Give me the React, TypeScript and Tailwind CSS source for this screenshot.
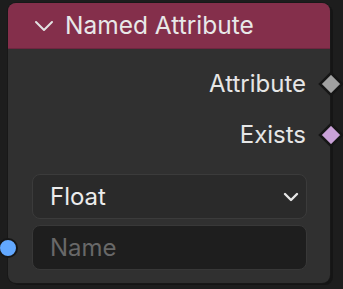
import React from 'react';

const font = { fontFamily: 'Inter, "Noto Sans", sans-serif' };

const Diamond: React.FC<{ color: string; className: string }> = ({ color, className }) => (
  <svg className={className} width="26" height="26" viewBox="0 0 26 26">
    <polygon points="13,2 24,13 13,24 2,13" fill={color} stroke="#161616" strokeWidth="2.5" />
  </svg>
);

export default function App() {
  return (
    <div className="w-[343px] h-[289px] bg-[#1d1d1d] pt-[3px] pl-[8px] overflow-hidden" style={font}>
      <div className="relative w-[322px] h-[280px] rounded-[8px] bg-[#303030] shadow-[0_0_0_1px_#181818,3px_2px_0_#151515]">
        {/* Header */}
        <div className="h-[46px] rounded-t-[8px] bg-[#842f4b] border-b border-[#6e2640] flex items-center pl-[26px] gap-[11px]">
          <svg width="20" height="14" viewBox="0 0 20 14" className="mt-[1px]">
            <polyline points="2,3 10,11 18,3" fill="none" stroke="#e2e2e2" strokeWidth="2" strokeLinecap="round" strokeLinejoin="round" />
          </svg>
          <span className="text-[24.5px] text-[#e8e8e8] leading-none">Named Attribute</span>
        </div>

        {/* Outputs */}
        <div className="flex flex-col pr-[24px] pt-[20px]">
          <div className="h-[30px] flex items-center justify-end text-[24px] text-[#e6e6e6]">Attribute</div>
          <div className="h-[30px] mt-[21px] flex items-center justify-end text-[24px] text-[#e6e6e6]">Exists</div>
        </div>

        {/* Inputs */}
        <div className="flex flex-col gap-[6px] pl-[24px] pr-[23px] mt-[24px]">
          <div className="h-[45px] rounded-[8px] bg-[#2a2a2a] border border-[#3b3b3b] flex items-center justify-between pl-[17px] pr-[7px]">
            <span className="text-[24px] text-[#ececec]">Float</span>
            <svg width="16" height="10" viewBox="0 0 16 10">
              <polyline points="2,2 8,8 14,2" fill="none" stroke="#e6e6e6" strokeWidth="2.4" strokeLinecap="round" strokeLinejoin="round" />
            </svg>
          </div>
          <div className="h-[45px] rounded-[8px] bg-[#1e1e1e] border border-[#383838] flex items-center pl-[17px]">
            <span className="text-[24px] text-[#686868]">Name</span>
          </div>
        </div>

        {/* Sockets */}
        <Diamond color="#a1a1a1" className="absolute left-[310px] top-[68px]" />
        <Diamond color="#c9a1d7" className="absolute left-[310px] top-[119px]" />
        <div className="absolute left-[-10px] top-[235px] w-[20px] h-[20px] rounded-full bg-[#62a8ff] border-2 border-[#161616]" />
      </div>
    </div>
  );
}
